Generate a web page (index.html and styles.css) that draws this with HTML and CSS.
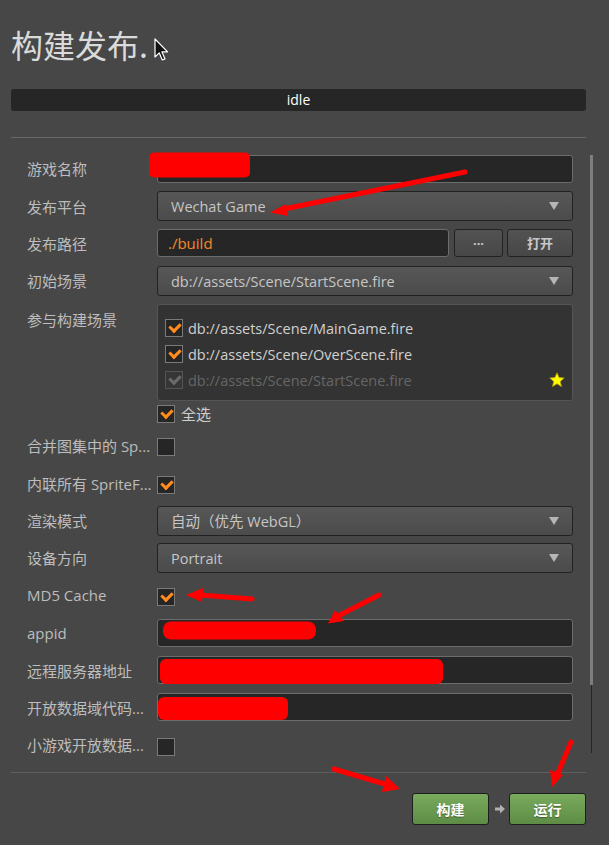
FILE: index.html
```html
<!DOCTYPE html>
<html>
<head>
<meta charset="utf-8">
<link rel="stylesheet" href="styles.css">
</head>
<body>
<div class="page">
  <h1 class="title">构建发布.</h1>
  <svg class="cursor" width="15" height="24" viewBox="0 0 15 24"><path d="M1 1 L1 19 L5.2 14.8 L8.3 22 L11 20.9 L7.9 13.8 L13.6 13.8 Z" fill="#111" stroke="#fff" stroke-width="1.2" stroke-linejoin="round"/></svg>
  <div class="status">idle</div>
  <div class="sep"></div>
  <div class="main">
    <div class="form">
      <div class="row"><div class="label">游戏名称</div><div class="ctrl"><div class="input"></div></div></div>
      <div class="row"><div class="label">发布平台</div><div class="ctrl"><div class="select">Wechat Game<span class="tri"></span></div></div></div>
      <div class="row"><div class="label">发布路径</div><div class="ctrl path"><div class="input orange">./build</div><div class="btn dots">···</div><div class="btn open">打开</div></div></div>
      <div class="row"><div class="label">初始场景</div><div class="ctrl"><div class="select">db://assets/Scene/StartScene.fire<span class="tri"></span></div></div></div>
      <div class="row scene">
        <div class="label">参与构建场景</div>
        <div class="ctrl">
          <div class="scenebox">
            <div class="item"><span class="cb on"></span>db://assets/Scene/MainGame.fire</div>
            <div class="item"><span class="cb on"></span>db://assets/Scene/OverScene.fire</div>
            <div class="item dis"><span class="cb on dis"></span>db://assets/Scene/StartScene.fire<svg class="star" width="16" height="16" viewBox="0 0 16 16"><path d="M8 0.8 L10.1 5.6 L15.2 6 L11.3 9.4 L12.5 14.6 L8 11.8 L3.5 14.6 L4.7 9.4 L0.8 6 L5.9 5.6 Z" fill="#ffff00" stroke="#b89a00" stroke-width="0.8"/></svg></div>
          </div>
          <div class="all"><span class="cb on"></span>全选</div>
        </div>
      </div>
      <div class="row"><div class="label">合并图集中的 Sp...</div><div class="ctrl"><span class="cb"></span></div></div>
      <div class="row"><div class="label">内联所有 SpriteF...</div><div class="ctrl"><span class="cb on"></span></div></div>
      <div class="row"><div class="label">渲染模式</div><div class="ctrl"><div class="select">自动（优先 WebGL）<span class="tri"></span></div></div></div>
      <div class="row"><div class="label">设备方向</div><div class="ctrl"><div class="select">Portrait<span class="tri"></span></div></div></div>
      <div class="row"><div class="label">MD5 Cache</div><div class="ctrl"><span class="cb on"></span></div></div>
      <div class="row"><div class="label">appid</div><div class="ctrl"><div class="input"></div></div></div>
      <div class="row"><div class="label">远程服务器地址</div><div class="ctrl"><div class="input"></div></div></div>
      <div class="row"><div class="label">开放数据域代码...</div><div class="ctrl"><div class="input"></div></div></div>
      <div class="row"><div class="label">小游戏开放数据...</div><div class="ctrl"><span class="cb"></span></div></div>
    </div>
    <div class="scrollbar"><div class="thumb"></div><div class="track"></div></div>
  </div>
  <div class="sep bottom"></div>
  <div class="actions">
    <div class="gbtn">构建</div>
    <svg class="next" width="12" height="12" viewBox="0 0 12 12"><path d="M1 4.5 H6 V1.5 L11 6 L6 10.5 V7.5 H1 Z" fill="#b0b0b0"/></svg>
    <div class="gbtn">运行</div>
  </div>
  <svg class="marks" width="609" height="845" viewBox="0 0 609 845">
    <g fill="#ff0000">
      <rect x="149" y="152.5" width="101" height="25" rx="5"/>
      <rect x="163" y="621.5" width="153" height="18" rx="8"/>
      <rect x="160" y="659" width="283" height="25" rx="6"/>
      <rect x="158" y="697" width="130" height="23" rx="6"/>
    </g>
    <g stroke="#ff0000" stroke-width="5" stroke-linecap="round" fill="none">
      <path d="M465 172 L284 209"/>
      <path d="M252 599 L200 595"/>
      <path d="M379 595 L338 616"/>
      <path d="M334 769 L388 785"/>
      <path d="M571 742 L557 775"/>
    </g>
    <g fill="#ff0000">
      <path d="M270 212.5 L286 204 L288 216 Z"/>
      <path d="M186 595 L203 588 L202 602 Z"/>
      <path d="M328 623.5 L335 610 L344 621 Z"/>
      <path d="M400 789 L386 776 L382 792 Z"/>
      <path d="M552 787 L550 770 L563 775 Z"/>
    </g>
  </svg>
</div>
</body>
</html>
```
FILE: styles.css
```css
* { box-sizing: border-box; }
html, body { margin: 0; padding: 0; }
body {
  background: #474747;
  font-family: "Open Sans", "Noto Sans CJK SC", sans-serif;
  color: #c8c8c8;
  width: 609px;
  height: 845px;
  overflow: hidden;
}
.page { position: relative; width: 609px; height: 845px; }
.title {
  margin: 0;
  padding: 20px 0 0 11px;
  height: 68px;
  font-family: "Noto Sans CJK SC", sans-serif;
  font-weight: 400;
  font-size: 32px;
  line-height: 48px;
  color: #dadada;
}
.cursor { position: absolute; left: 154px; top: 38px; }
.status {
  margin: 21px 23px 0 11px;
  height: 22px;
  background: #262626;
  border-radius: 3px;
  color: #ffffff;
  font-size: 14px;
  line-height: 22px;
  text-align: center;
}
.sep { margin: 26px 23px 0 11px; height: 1px; background: #686868; }
.main { display: flex; margin: 0 15px 0 11px; height: 634px; }
.form { flex: 1; padding: 12px 17px 0 16px; }
.row { display: flex; align-items: center; height: 37.4px; }
.label {
  width: 130px;
  flex: none;
  font-size: 15px;
  color: #bdbdbd;
  white-space: nowrap;
}
.ctrl { flex: 1; min-width: 0; }
.input {
  height: 28px;
  background: #262626;
  border: 1px solid #6c6c6c;
  border-radius: 3px;
  font-size: 15px;
  line-height: 26px;
  padding-left: 10px;
}
.orange { color: #f5892a; }
.select {
  position: relative;
  height: 30px;
  background: linear-gradient(#575757, #4b4b4b);
  border: 1px solid #222;
  border-radius: 3px;
  font-size: 14.5px;
  line-height: 29px;
  padding-left: 13px;
  color: #c6c6c6;
}
.tri {
  position: absolute;
  right: 13px;
  top: 10px;
  width: 0; height: 0;
  border-left: 5px solid transparent;
  border-right: 5px solid transparent;
  border-top: 8px solid #b5b5b5;
}
.path { display: flex; }
.path .input { flex: 1; }
.btn {
  height: 28px;
  background: linear-gradient(#525252, #474747);
  border: 1px solid #222;
  border-radius: 3px;
  font-size: 13px;
  font-weight: 700;
  line-height: 26px;
  text-align: center;
  color: #c8c8c8;
}
.dots { width: 49px; margin-left: 5px; }
.open { width: 66px; margin-left: 4px; }
.row.scene { height: 127.5px; align-items: flex-start; }
.row.scene .label { padding-top: 9px; }
.scenebox {
  margin-top: 4.5px;
  height: 97px;
  background: #333333;
  border: 1px solid #555;
  border-radius: 3px;
  padding: 10px 0 0 7px;
}
.item {
  display: flex;
  align-items: center;
  height: 26px;
  font-size: 14.5px;
  color: #d0d0d0;
  position: relative;
}
.item.dis { color: #666; }
.item .cb { margin-right: 5px; }
.star { position: absolute; right: 7px; top: 5px; }
.cb {
  display: inline-block;
  position: relative;
  width: 18px;
  height: 18px;
  background: #262626;
  border: 1px solid #7a7a7a;
  vertical-align: middle;
  flex: none;
}
.cb.on::after {
  content: "";
  position: absolute;
  left: 5px;
  top: 1px;
  width: 5px;
  height: 8px;
  border-right: 3px solid #ff8c1c;
  border-bottom: 3px solid #ff8c1c;
  transform: rotate(45deg);
}
.cb.dis { background: #363636; border-color: #555; }
.cb.dis::after { border-color: #6a6a6a; }
.all {
  display: flex;
  align-items: center;
  margin-top: 2px;
  font-size: 15px;
  color: #cfcfcf;
}
.all .cb { margin-right: 6px; }
.scrollbar { width: 4px; padding-top: 17px; }
.thumb { width: 3px; height: 530px; background: #7e7e7e; }
.track { width: 1px; margin-left: 1px; height: 68px; background: #262626; }
.sep.bottom { margin-top: 0; background: #5e5e5e; }
.actions {
  display: flex;
  justify-content: flex-end;
  align-items: center;
  margin: 20px 23px 0 0;
}
.gbtn {
  width: 77px;
  height: 32px;
  background: linear-gradient(#79aa5d, #5e8c45);
  border: 1px solid #1e1e1e;
  border-radius: 3px;
  color: #fff;
  font-family: "Noto Sans CJK SC", sans-serif;
  font-weight: 700;
  font-size: 14px;
  line-height: 30px;
  text-align: center;
  text-shadow: 0 1px 1px rgba(0,0,0,0.35);
}
.next { margin: 0 3px 0 5px; }
.marks { position: absolute; left: 0; top: 0; pointer-events: none; }
```
